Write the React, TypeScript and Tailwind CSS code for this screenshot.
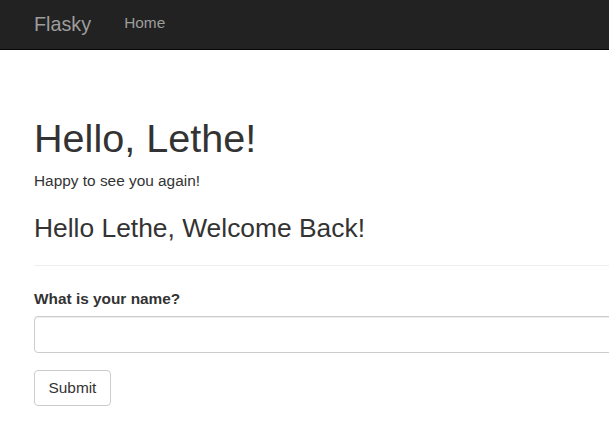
export default function App() {
  return (
    <div className="min-h-screen w-full overflow-hidden bg-white text-[#333] font-['Liberation_Sans',Arial,sans-serif]">
      <nav className="h-[50px] bg-[#222] border-b border-[#080808] flex items-start pl-[34px]">
        <a href="#" className="mt-[14px] text-[19.8px] leading-[20px] text-[#9d9d9d]">
          Flasky
        </a>
        <a href="#" className="mt-[13px] ml-[33px] text-[15.4px] leading-[20px] text-[#9d9d9d]">
          Home
        </a>
      </nav>

      <main className="pl-[34px] mr-[-80px]">
        <h1 className="mt-[66px] text-[39.6px] leading-[44px]">Hello, Lethe!</h1>
        <p className="mt-[10px] text-[15.4px] leading-[22px]">Happy to see you again!</p>
        <h3 className="mt-[22px] text-[26.4px] leading-[29px]">Hello Lethe, Welcome Back!</h3>
        <hr className="mt-[22px] border-t border-[#eee]" />

        <form className="mt-[22px]" onSubmit={(e) => e.preventDefault()}>
          <label htmlFor="name" className="block text-[15.4px] leading-[22px] font-bold">
            What is your name?
          </label>
          <input
            id="name"
            type="text"
            className="mt-[6px] block w-full h-[37px] rounded-[4px] border border-[#ccc] px-3 text-[15.4px] shadow-[inset_0_1px_1px_rgba(0,0,0,0.075)] outline-none"
          />
          <button
            type="submit"
            className="mt-[17px] h-[36px] px-[13.5px] rounded-[4px] border border-[#ccc] bg-white text-[15.4px] leading-[22px] text-[#333]"
          >
            Submit
          </button>
        </form>
      </main>
    </div>
  );
}
